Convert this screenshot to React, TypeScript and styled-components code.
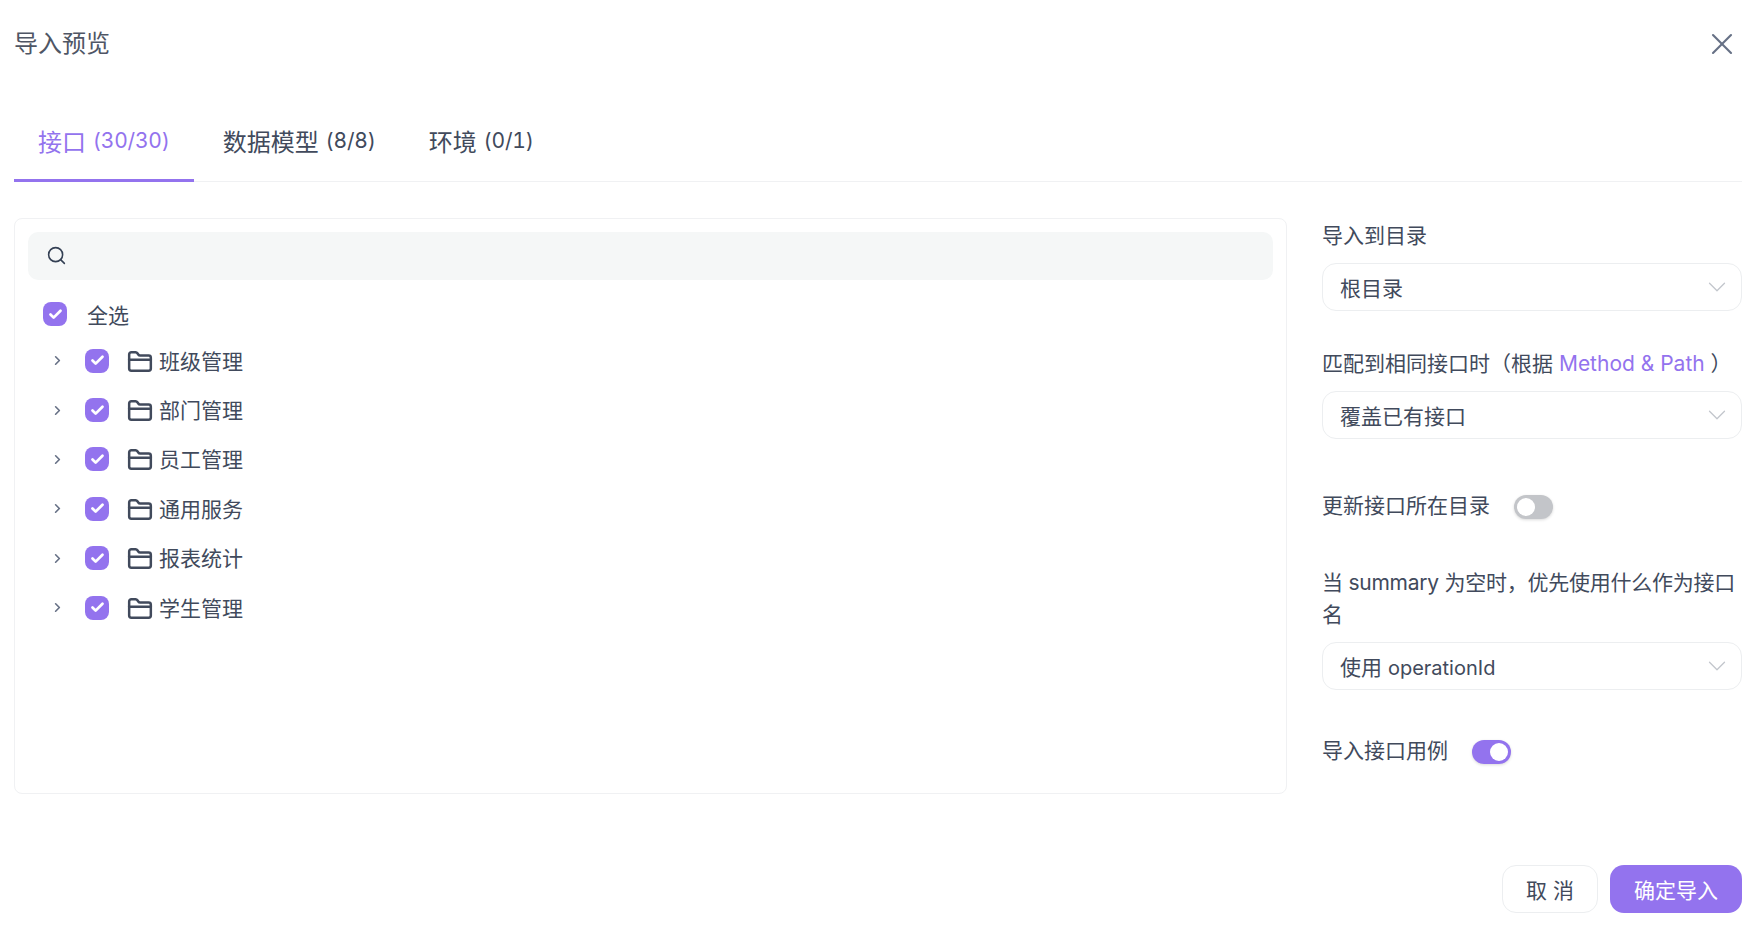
import React from "react";
import styled, { createGlobalStyle } from "styled-components";
import { Check, ChevronDown, ChevronRight, FolderClosed, Search, X } from "lucide-react";

const PRIMARY = "#9373ee";
const TEXT = "#414a5c";

const folders = ["班级管理", "部门管理", "员工管理", "通用服务", "报表统计", "学生管理"];

const GlobalStyle = createGlobalStyle`
  html, body {
    margin: 0;
    background: #fff;
  }
  * {
    box-sizing: border-box;
  }
`;

const App: React.FC = () => {
  return (
    <>
      <GlobalStyle />
      <Page>
        <Header>
          <Title>导入预览</Title>
          <CloseButton>
            <X size={36} strokeWidth={1.4} />
          </CloseButton>
        </Header>
        <Tabs>
          <Tab $active>
            接口 <TabCount>(30/30)</TabCount>
          </Tab>
          <Tab>
            数据模型 <TabCount>(8/8)</TabCount>
          </Tab>
          <Tab>
            环境 <TabCount>(0/1)</TabCount>
          </Tab>
        </Tabs>
        <Body>
          <TreePanel>
            <SearchBar>
              <Search size={21} strokeWidth={1.8} color="#344054" />
            </SearchBar>
            <AllRow>
              <CheckBox>
                <Check size={15} strokeWidth={4.4} color="#fff" />
              </CheckBox>
              <AllLabel>全选</AllLabel>
            </AllRow>
            {folders.map((name) => (
              <TreeRow key={name}>
                <Expander>
                  <ChevronRight size={15} strokeWidth={2.6} />
                </Expander>
                <CheckBox>
                  <Check size={15} strokeWidth={4.4} color="#fff" />
                </CheckBox>
                <FolderIcon>
                  <FolderClosed size={26} strokeWidth={2.3} />
                </FolderIcon>
                <FolderName>{name}</FolderName>
              </TreeRow>
            ))}
          </TreePanel>
          <Side>
            <Field>
              <Label>导入到目录</Label>
              <Select>
                根目录
                <ChevronDown size={30} strokeWidth={1} color="#c2c6cc" />
              </Select>
            </Field>
            <Field>
              <Label>
                匹配到相同接口时（根据 <Accent>Method &amp; Path</Accent> ）
              </Label>
              <Select>
                覆盖已有接口
                <ChevronDown size={30} strokeWidth={1} color="#c2c6cc" />
              </Select>
            </Field>
            <SwitchRow $gapTop={14}>
              <Label>更新接口所在目录</Label>
              <Switch $on={false}>
                <Knob />
              </Switch>
            </SwitchRow>
            <Field>
              <Label $tight>当 summary 为空时，优先使用什么作为接口名</Label>
              <Select>
                <span>
                  使用 <Word>operationId</Word>
                </span>
                <ChevronDown size={30} strokeWidth={1} color="#c2c6cc" />
              </Select>
            </Field>
            <SwitchRow $gapTop={8}>
              <Label>导入接口用例</Label>
              <Switch $on>
                <Knob />
              </Switch>
            </SwitchRow>
          </Side>
        </Body>
        <Footer>
          <CancelButton>取 消</CancelButton>
          <ConfirmButton>确定导入</ConfirmButton>
        </Footer>
      </Page>
    </>
  );
};

const Page = styled.div`
  width: 1752px;
  height: 938px;
  padding: 0 10px 0 14px;
  overflow: hidden;
  font-family: Inter, "Noto Sans CJK SC", sans-serif;
  font-size: 21px;
  color: ${TEXT};
`;

const Header = styled.div`
  height: 88px;
  display: flex;
  align-items: center;
  justify-content: space-between;
`;

const Title = styled.div`
  font-size: 24px;
  padding-bottom: 6px;
  color: #4f5665;
`;

const CloseButton = styled.div`
  display: flex;
  color: #667085;
  margin-right: 2px;
`;

const Tabs = styled.div`
  height: 94px;
  display: flex;
  align-items: stretch;
  gap: 5px;
  border-bottom: 1px solid #f0f1f3;
`;

const Tab = styled.div<{ $active?: boolean }>`
  display: flex;
  align-items: center;
  white-space: pre;
  padding: 14px 24px 0;
  font-size: 24px;
  color: ${(props) => (props.$active ? PRIMARY : TEXT)};
  border-bottom: 3px solid ${(props) => (props.$active ? PRIMARY : "transparent")};
  margin-bottom: -1px;
`;

const TabCount = styled.span`
  font-size: 21px;
  letter-spacing: -0.2px;
  font-variant-numeric: tabular-nums;
`;

const Body = styled.div`
  display: flex;
  gap: 35px;
  margin-top: 36px;
`;

const TreePanel = styled.div`
  width: 1273px;
  height: 576px;
  padding: 13px;
  border: 1px solid #f0f1f3;
  border-radius: 8px;
`;

const SearchBar = styled.div`
  height: 48px;
  display: flex;
  align-items: center;
  padding: 0 18px 2px;
  background: #f5f7f7;
  border-radius: 10px;
`;

const AllRow = styled.div`
  height: 44px;
  margin-top: 12px;
  display: flex;
  align-items: center;
  padding-left: 15px;
`;

const AllLabel = styled.span`
  margin-left: 20px;
`;

const TreeRow = styled.div`
  height: 49.4px;
  display: flex;
  align-items: center;
  padding-left: 22px;
`;

const Expander = styled.span`
  width: 35px;
  display: flex;
  color: #667085;
`;

const CheckBox = styled.span`
  width: 24px;
  height: 24px;
  flex: none;
  display: flex;
  align-items: center;
  justify-content: center;
  background: ${PRIMARY};
  border-radius: 8px;
`;

const FolderIcon = styled.span`
  display: flex;
  margin: 2px 0 0 18px;
  color: #414a5c;
`;

const FolderName = styled.span`
  margin: 0 0 2px 6px;
`;

const Side = styled.div`
  width: 420px;
  padding-top: 2px;
  display: flex;
  flex-direction: column;
`;

const Field = styled.div`
  display: flex;
  flex-direction: column;
  margin-bottom: 37px;
`;

const Label = styled.div<{ $tight?: boolean }>`
  line-height: 32px;
  letter-spacing: ${(props) => (props.$tight ? "-0.25px" : "normal")};
`;

const Accent = styled.span`
  color: ${PRIMARY};
`;

const Word = styled.span`
  font-size: 20px;
`;

const Select = styled.div`
  height: 48px;
  margin-top: 11px;
  display: flex;
  align-items: center;
  justify-content: space-between;
  padding: 0 9px 0 17px;
  border: 1px solid #eceef0;
  border-radius: 14px;
`;

const SwitchRow = styled.div<{ $gapTop: number }>`
  display: flex;
  align-items: center;
  gap: 24px;
  margin-top: ${(props) => props.$gapTop}px;
  margin-bottom: 45px;

  &:last-child {
    margin-bottom: 0;
  }
`;

const Switch = styled.span<{ $on: boolean }>`
  width: 39px;
  height: 24px;
  margin-top: 2px;
  display: flex;
  align-items: center;
  justify-content: ${(props) => (props.$on ? "flex-end" : "flex-start")};
  padding: 0 3px;
  border-radius: 12px;
  background: ${(props) => (props.$on ? PRIMARY : "#c3c5c9")};
  box-shadow: 0 1px 3px rgba(0, 0, 0, 0.15);
`;

const Knob = styled.span`
  width: 18px;
  height: 18px;
  border-radius: 50%;
  background: #fff;
`;

const Footer = styled.div`
  display: flex;
  justify-content: flex-end;
  gap: 12px;
  margin-top: 71px;
`;

const CancelButton = styled.div`
  width: 96px;
  height: 48px;
  display: flex;
  align-items: center;
  justify-content: center;
  border: 1px solid #eceef0;
  border-radius: 14px;
`;

const ConfirmButton = styled.div`
  width: 132px;
  height: 48px;
  display: flex;
  align-items: center;
  justify-content: center;
  background: ${PRIMARY};
  color: #fff;
  border-radius: 14px;
`;

export default App;
